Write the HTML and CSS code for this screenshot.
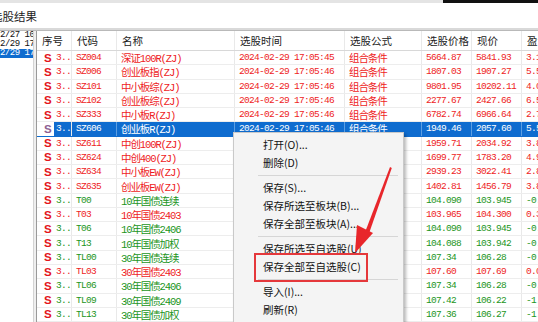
FILE: index.html
```html
<!DOCTYPE html>
<html lang="zh-CN">
<head>
  <meta charset="UTF-8" />
  <meta name="viewport" content="width=device-width, initial-scale=1.0"/>
  <title>选股结果</title>
  <link rel="stylesheet" href="styles.css">
</head>
<body>
  <div class="topstrip"><div class="topstrip-dark"></div></div>
  <div class="titlebar"><span class="title">选股结果</span></div>
  <div class="divider"></div>

  <div class="main">
    <div class="datelist">
      <div class="date">2/27 10:22</div>
      <div class="date">2/29 17:03</div>
      <div class="date sel">2/29 17:05</div>
    </div>
    <div class="splitter"></div>

    <div class="grid">
      <div class="row head">
        <div class="cell">序号</div>
        <div class="cell">代码</div>
        <div class="cell">名称</div>
        <div class="cell">选股时间</div>
        <div class="cell">选股公式</div>
        <div class="cell">选股价格</div>
        <div class="cell">现价</div>
        <div class="cell">盈亏</div>
      </div>

      <div class="row red">
        <div class="cell c1"><span class="s">S</span><span class="n">3..</span></div>
        <div class="cell mono">SZ004</div>
        <div class="cell cn">深证100R(ZJ)</div>
        <div class="cell mono">2024-02-29 17:05:45</div>
        <div class="cell cn">组合条件</div>
        <div class="cell mono">5664.87</div>
        <div class="cell mono">5841.93</div>
        <div class="cell mono">3.13%</div>
      </div>
      <div class="row red">
        <div class="cell c1"><span class="s">S</span><span class="n">3..</span></div>
        <div class="cell mono">SZ006</div>
        <div class="cell cn">创业板指(ZJ)</div>
        <div class="cell mono">2024-02-29 17:05:46</div>
        <div class="cell cn">组合条件</div>
        <div class="cell mono">1807.03</div>
        <div class="cell mono">1907.27</div>
        <div class="cell mono">5.55%</div>
      </div>
      <div class="row red">
        <div class="cell c1"><span class="s">S</span><span class="n">3..</span></div>
        <div class="cell mono">SZ101</div>
        <div class="cell cn">中小板综(ZJ)</div>
        <div class="cell mono">2024-02-29 17:05:46</div>
        <div class="cell cn">组合条件</div>
        <div class="cell mono">9801.95</div>
        <div class="cell mono">10202.11</div>
        <div class="cell mono">4.08%</div>
      </div>
      <div class="row red">
        <div class="cell c1"><span class="s">S</span><span class="n">3..</span></div>
        <div class="cell mono">SZ102</div>
        <div class="cell cn">创业板综(ZJ)</div>
        <div class="cell mono">2024-02-29 17:05:46</div>
        <div class="cell cn">组合条件</div>
        <div class="cell mono">2277.67</div>
        <div class="cell mono">2427.66</div>
        <div class="cell mono">6.59%</div>
      </div>
      <div class="row red">
        <div class="cell c1"><span class="s">S</span><span class="n">3..</span></div>
        <div class="cell mono">SZ333</div>
        <div class="cell cn">中小板R(ZJ)</div>
        <div class="cell mono">2024-02-29 17:05:46</div>
        <div class="cell cn">组合条件</div>
        <div class="cell mono">6782.74</div>
        <div class="cell mono">6966.64</div>
        <div class="cell mono">2.71%</div>
      </div>
      <div class="row red sel">
        <div class="cell c1"><span class="s">S</span><span class="n">3..</span></div>
        <div class="cell mono">SZ606</div>
        <div class="cell cn">创业板R(ZJ)</div>
        <div class="cell mono">2024-02-29 17:05:46</div>
        <div class="cell cn">组合条件</div>
        <div class="cell mono">1949.46</div>
        <div class="cell mono">2057.60</div>
        <div class="cell mono">5.55%</div>
      </div>
      <div class="row red">
        <div class="cell c1"><span class="s">S</span><span class="n">3..</span></div>
        <div class="cell mono">SZ611</div>
        <div class="cell cn">中创100R(ZJ)</div>
        <div class="cell mono">2024-02-29 17:05:46</div>
        <div class="cell cn">组合条件</div>
        <div class="cell mono">1959.71</div>
        <div class="cell mono">2034.92</div>
        <div class="cell mono">3.84%</div>
      </div>
      <div class="row red">
        <div class="cell c1"><span class="s">S</span><span class="n">3..</span></div>
        <div class="cell mono">SZ624</div>
        <div class="cell cn">中创400(ZJ)</div>
        <div class="cell mono">2024-02-29 17:05:46</div>
        <div class="cell cn">组合条件</div>
        <div class="cell mono">1699.77</div>
        <div class="cell mono">1783.20</div>
        <div class="cell mono">4.91%</div>
      </div>
      <div class="row red">
        <div class="cell c1"><span class="s">S</span><span class="n">3..</span></div>
        <div class="cell mono">SZ634</div>
        <div class="cell cn">中小板EW(ZJ)</div>
        <div class="cell mono">2024-02-29 17:05:46</div>
        <div class="cell cn">组合条件</div>
        <div class="cell mono">2939.23</div>
        <div class="cell mono">3022.41</div>
        <div class="cell mono">2.83%</div>
      </div>
      <div class="row red">
        <div class="cell c1"><span class="s">S</span><span class="n">3..</span></div>
        <div class="cell mono">SZ635</div>
        <div class="cell cn">创业板EW(ZJ)</div>
        <div class="cell mono">2024-02-29 17:05:46</div>
        <div class="cell cn">组合条件</div>
        <div class="cell mono">1402.81</div>
        <div class="cell mono">1456.79</div>
        <div class="cell mono">3.85%</div>
      </div>
      <div class="row green">
        <div class="cell c1"><span class="s">S</span><span class="n">3..</span></div>
        <div class="cell mono">T00</div>
        <div class="cell cn">10年国债连续</div>
        <div class="cell mono">2024-02-29 17:05:46</div>
        <div class="cell cn">组合条件</div>
        <div class="cell mono">104.090</div>
        <div class="cell mono">103.945</div>
        <div class="cell mono">-0.14%</div>
      </div>
      <div class="row red">
        <div class="cell c1"><span class="s">S</span><span class="n">3..</span></div>
        <div class="cell mono">T03</div>
        <div class="cell cn">10年国债2403</div>
        <div class="cell mono">2024-02-29 17:05:46</div>
        <div class="cell cn">组合条件</div>
        <div class="cell mono">103.965</div>
        <div class="cell mono">104.300</div>
        <div class="cell mono">0.32%</div>
      </div>
      <div class="row green">
        <div class="cell c1"><span class="s">S</span><span class="n">3..</span></div>
        <div class="cell mono">T06</div>
        <div class="cell cn">10年国债2406</div>
        <div class="cell mono">2024-02-29 17:05:46</div>
        <div class="cell cn">组合条件</div>
        <div class="cell mono">104.090</div>
        <div class="cell mono">103.945</div>
        <div class="cell mono">-0.14%</div>
      </div>
      <div class="row green">
        <div class="cell c1"><span class="s">S</span><span class="n">3..</span></div>
        <div class="cell mono">T13</div>
        <div class="cell cn">10年国债加权</div>
        <div class="cell mono">2024-02-29 17:05:46</div>
        <div class="cell cn">组合条件</div>
        <div class="cell mono">104.088</div>
        <div class="cell mono">103.942</div>
        <div class="cell mono">-0.14%</div>
      </div>
      <div class="row green">
        <div class="cell c1"><span class="s">S</span><span class="n">3..</span></div>
        <div class="cell mono">TL00</div>
        <div class="cell cn">30年国债连续</div>
        <div class="cell mono">2024-02-29 17:05:46</div>
        <div class="cell cn">组合条件</div>
        <div class="cell mono">107.34</div>
        <div class="cell mono">106.28</div>
        <div class="cell mono">-0.99%</div>
      </div>
      <div class="row red">
        <div class="cell c1"><span class="s">S</span><span class="n">3..</span></div>
        <div class="cell mono">TL03</div>
        <div class="cell cn">30年国债2403</div>
        <div class="cell mono">2024-02-29 17:05:46</div>
        <div class="cell cn">组合条件</div>
        <div class="cell mono">107.60</div>
        <div class="cell mono">107.69</div>
        <div class="cell mono">0.08%</div>
      </div>
      <div class="row green">
        <div class="cell c1"><span class="s">S</span><span class="n">3..</span></div>
        <div class="cell mono">TL06</div>
        <div class="cell cn">30年国债2406</div>
        <div class="cell mono">2024-02-29 17:05:46</div>
        <div class="cell cn">组合条件</div>
        <div class="cell mono">107.34</div>
        <div class="cell mono">106.28</div>
        <div class="cell mono">-0.99%</div>
      </div>
      <div class="row green">
        <div class="cell c1"><span class="s">S</span><span class="n">3..</span></div>
        <div class="cell mono">TL09</div>
        <div class="cell cn">30年国债2409</div>
        <div class="cell mono">2024-02-29 17:05:46</div>
        <div class="cell cn">组合条件</div>
        <div class="cell mono">107.42</div>
        <div class="cell mono">106.22</div>
        <div class="cell mono">-1.12%</div>
      </div>
      <div class="row green">
        <div class="cell c1"><span class="s">S</span><span class="n">3..</span></div>
        <div class="cell mono">TL13</div>
        <div class="cell cn">30年国债加权</div>
        <div class="cell mono">2024-02-29 17:05:46</div>
        <div class="cell cn">组合条件</div>
        <div class="cell mono">107.36</div>
        <div class="cell mono">106.27</div>
        <div class="cell mono">-1.02%</div>
      </div>
    </div>
  </div>

  <!-- 右键菜单 -->
  <div class="menu">
    <div class="item">打开(O)...</div>
    <div class="item">删除(D)</div>
    <div class="sep"></div>
    <div class="item">保存(S)...</div>
    <div class="item">保存所选至板块(B)...</div>
    <div class="item">保存全部至板块(A)...</div>
    <div class="sep"></div>
    <div class="item">保存所选至自选股(U)</div>
    <div class="item">保存全部至自选股(C)</div>
    <div class="sep"></div>
    <div class="item">导入(I)...</div>
    <div class="item">刷新(R)</div>
  </div>

  <div class="callout"></div>
  <svg class="arrow" width="50" height="100" viewBox="0 0 50 100">
    <polygon points="40,7 41.8,8 19.5,72 15.5,71" fill="#e8262b"/>
    <polygon points="5,93 7,65 23,73" fill="#e8262b"/>
  </svg>
</body>
</html>
```

FILE: styles.css
```css
body {
  margin: 0;
  width: 538px;
  height: 322px;
  overflow: hidden;
  background: #fff;
  font-family: "Noto Sans CJK SC", sans-serif;
  position: relative;
}
.topstrip {
  height: 3px;
  background: #e4e4e4;
  display: flex;
  justify-content: flex-end;
}
.topstrip-dark {
  width: 95px;
  background: #111;
}
.titlebar {
  height: 25px;
  overflow: hidden;
  display: flex;
  align-items: center;
}
.title {
  margin-left: -9px;
  font-size: 11.5px;
  color: #222;
}
.divider {
  height: 2px;
  background: #d9d9d9;
  border-bottom: 1px solid #b9b9b9;
}
.main {
  display: flex;
  height: 291px;
}
.datelist {
  width: 33px;
  overflow: hidden;
  background: #fff;
}
.date {
  height: 9px;
  line-height: 9px;
  font-family: "Liberation Mono", monospace;
  font-size: 9px;
  letter-spacing: -0.5px;
  white-space: nowrap;
  color: #111;
}
.date.sel {
  background: #0f6ccf;
  color: #fff;
}
.splitter {
  width: 2px;
  background: #efefef;
  border-left: 1px solid #d4d4d4;
  border-right: 1px solid #9a9a9a;
}
.grid {
  flex: 1;
  overflow: hidden;
}
.row {
  display: grid;
  grid-template-columns: 35px 45px 118px 110px 77px 50px 50px 60px;
  height: 14.28px;
  box-sizing: border-box;
  border-bottom: 1px solid #ededed;
}
.row.head {
  height: 20px;
  border-bottom: 1px solid #d8d8d8;
}
.cell {
  border-right: 1px solid #e9e9e9;
  padding-left: 4px;
  white-space: nowrap;
  overflow: hidden;
  display: flex;
  align-items: center;
  font-size: 10px;
}
.head .cell {
  font-size: 10.5px;
  color: #222;
  padding-left: 5px;
}
.mono {
  font-family: "Liberation Mono", monospace;
  font-size: 9.5px;
  letter-spacing: -0.7px;
}
.cn {
  font-family: "Liberation Mono", "Noto Sans CJK SC", monospace;
  font-size: 10.5px;
  letter-spacing: -1.1px;
}
.c1 {
  padding-left: 0;
}
.s {
  width: 18px;
  padding-left: 7px;
  box-sizing: border-box;
  font-family: "Liberation Sans", sans-serif;
  font-weight: bold;
  font-size: 11.5px;
  color: #e3141c;
}
.n {
  flex: 1;
  align-self: stretch;
  display: flex;
  align-items: center;
  padding-left: 2px;
  font-family: "Liberation Mono", monospace;
  font-size: 9.5px;
  letter-spacing: -0.7px;
}
.red {
  color: #ee1c24;
}
.green {
  color: #1b951b;
}
.row.sel {
  border-bottom-color: #0f6ccf;
}
.row.sel .cell:not(.c1),
.row.sel .n {
  background: #0f6ccf;
  color: #fff;
  border-right-color: #5c9ee2;
}
.row.sel .s {
  color: #8d5f92;
}
.menu {
  position: absolute;
  left: 233px;
  top: 132px;
  width: 171px;
  box-sizing: border-box;
  padding: 3px 0 20px;
  background: #f4f4f4;
  border: 1px solid #c9c9c9;
  box-shadow: 2px 2px 3px rgba(0,0,0,0.28);
}
.item {
  height: 18px;
  line-height: 18px;
  padding-left: 29px;
  font-size: 10.5px;
  color: #111;
  white-space: nowrap;
}
.sep {
  height: 7px;
  margin: 0 5px 0 24px;
  display: flex;
  align-items: center;
}
.sep::after {
  content: "";
  flex: 1;
  height: 1px;
  background: #d6d6d6;
}
.callout {
  position: absolute;
  left: 254px;
  top: 253px;
  width: 114px;
  height: 29px;
  box-sizing: border-box;
  border: 2.5px solid #e5383b;
}
.arrow {
  position: absolute;
  left: 350px;
  top: 160px;
}
```
